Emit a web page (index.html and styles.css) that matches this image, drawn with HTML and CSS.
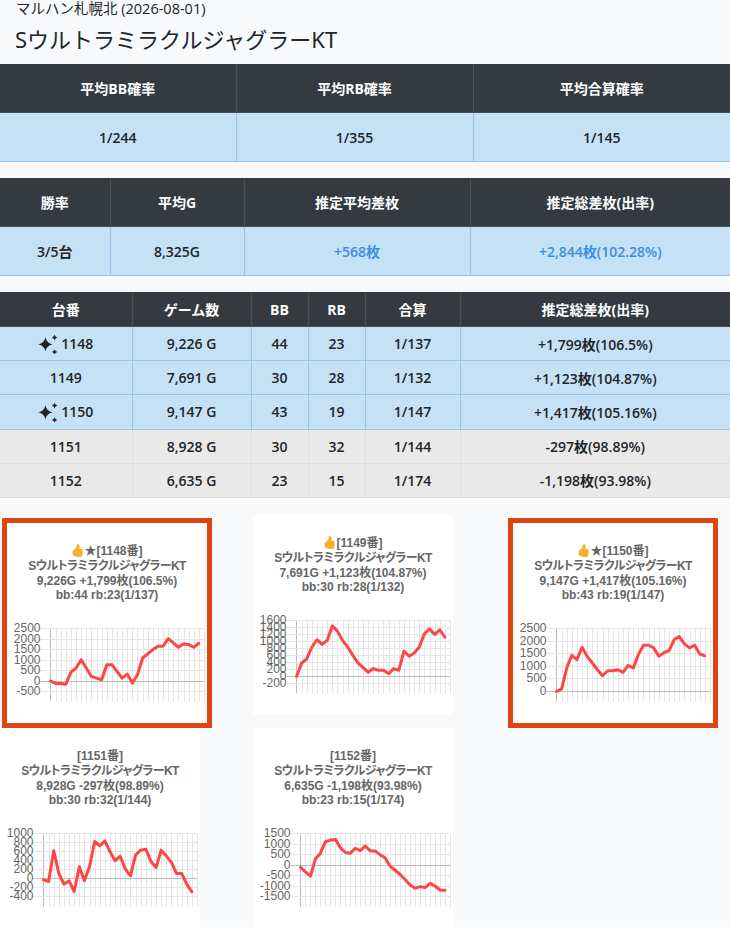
FILE: index.html
```html
<!DOCTYPE html>
<html lang="ja">
<head>
<meta charset="utf-8">
<title>SウルトラミラクルジャグラーKT - マルハン札幌北</title>
<link rel="stylesheet" href="styles.css">
<script src="script.js" defer></script>
</head>
<body>
<header class="page-head">
  <div class="shop">マルハン札幌北 (2026-08-01)</div>
  <h1 class="machine">SウルトラミラクルジャグラーKT</h1>
</header>

<table class="stats tall">
  <colgroup><col class="c236"><col class="c237"><col></colgroup>
  <thead><tr><th>平均BB確率</th><th>平均RB確率</th><th>平均合算確率</th></tr></thead>
  <tbody><tr class="win"><td>1/244</td><td>1/355</td><td>1/145</td></tr></tbody>
</table>

<table class="stats tall">
  <colgroup><col class="c110"><col class="c134"><col class="c226"><col></colgroup>
  <thead><tr><th>勝率</th><th>平均G</th><th>推定平均差枚</th><th>推定総差枚(出率)</th></tr></thead>
  <tbody><tr class="win"><td>3/5台</td><td>8,325G</td><td class="plus">+568枚</td><td class="plus">+2,844枚(102.28%)</td></tr></tbody>
</table>

<table class="stats short">
  <colgroup><col class="c132"><col class="c119"><col class="c57"><col class="c57"><col class="c95"><col></colgroup>
  <thead><tr><th>台番</th><th>ゲーム数</th><th>BB</th><th>RB</th><th>合算</th><th>推定総差枚(出率)</th></tr></thead>
  <tbody>
    <tr class="win"><td><svg class="sparkle" viewBox="0 0 20 20" aria-hidden="true"><path d="M7.4 3.2Q8.6 9 14.4 10.3Q8.6 11.6 7.4 17.4Q6.2 11.6 0.4 10.3Q6.2 9 7.4 3.2Z"/><path d="M16.6 0.8Q17.1 3.1 19.4 3.6Q17.1 4.1 16.6 6.4Q16.1 4.1 13.8 3.6Q16.1 3.1 16.6 0.8Z"/><path d="M16.6 15.2Q17.1 17.5 19.4 18Q17.1 18.5 16.6 20.8Q16.1 18.5 13.8 18Q16.1 17.5 16.6 15.2Z"/></svg>1148</td><td>9,226 G</td><td>44</td><td>23</td><td>1/137</td><td>+1,799枚(106.5%)</td></tr>
    <tr class="win"><td>1149</td><td>7,691 G</td><td>30</td><td>28</td><td>1/132</td><td>+1,123枚(104.87%)</td></tr>
    <tr class="win"><td><svg class="sparkle" viewBox="0 0 20 20" aria-hidden="true"><path d="M7.4 3.2Q8.6 9 14.4 10.3Q8.6 11.6 7.4 17.4Q6.2 11.6 0.4 10.3Q6.2 9 7.4 3.2Z"/><path d="M16.6 0.8Q17.1 3.1 19.4 3.6Q17.1 4.1 16.6 6.4Q16.1 4.1 13.8 3.6Q16.1 3.1 16.6 0.8Z"/><path d="M16.6 15.2Q17.1 17.5 19.4 18Q17.1 18.5 16.6 20.8Q16.1 18.5 13.8 18Q16.1 17.5 16.6 15.2Z"/></svg>1150</td><td>9,147 G</td><td>43</td><td>19</td><td>1/147</td><td>+1,417枚(105.16%)</td></tr>
    <tr class="lose"><td>1151</td><td>8,928 G</td><td>30</td><td>32</td><td>1/144</td><td>-297枚(98.89%)</td></tr>
    <tr class="lose"><td>1152</td><td>6,635 G</td><td>23</td><td>15</td><td>1/174</td><td>-1,198枚(93.98%)</td></tr>
  </tbody>
</table>

<section class="charts">
  <article class="card hot">
    <div class="card-title">
      <div><svg class="thumb" viewBox="0 0 16 16" aria-hidden="true"><path d="M6.956 1.745C7.021.81 7.908.087 8.864.325l.261.066c.463.116.874.456 1.012.965.22.816.533 2.511.062 4.51a9.84 9.84 0 0 1 .443-.051c.713-.065 1.669-.072 2.516.21.518.173.994.681 1.2 1.273.184.532.16 1.162-.234 1.733.058.119.103.242.138.363.077.27.113.567.113.856 0 .289-.036.586-.113.856-.039.135-.09.273-.16.404.169.387.107.819-.003 1.148a3.163 3.163 0 0 1-.488.901c.054.152.076.312.076.465 0 .305-.089.625-.253.912C13.1 15.522 12.437 16 11.5 16H8c-.605 0-1.07-.081-1.466-.218a4.82 4.82 0 0 1-.97-.484l-.048-.03c-.504-.307-.999-.609-2.068-.722C2.682 14.464 2 13.846 2 13V9c0-.85.685-1.432 1.357-1.615.849-.232 1.574-.787 2.132-1.41.56-.627.914-1.28 1.039-1.639.199-.575.356-1.539.428-2.59z"/></svg>★[1148番]</div>
      <div class="name">SウルトラミラクルジャグラーKT</div>
      <div>9,226G +1,799枚(106.5%)</div>
      <div>bb:44 rb:23(1/137)</div>
    </div>
    <div class="plot" data-min="-500" data-max="2500" data-step="500" data-values="0,-117,-117,-150,425,617,1016,617,218,138,58,777,777,457,138,330,-100,298,1096,1287,1495,1654,1654,2021,1814,1607,1766,1734,1607,1799"></div>
  </article>

  <article class="card">
    <div class="card-title">
      <div><svg class="thumb" viewBox="0 0 16 16" aria-hidden="true"><path d="M6.956 1.745C7.021.81 7.908.087 8.864.325l.261.066c.463.116.874.456 1.012.965.22.816.533 2.511.062 4.51a9.84 9.84 0 0 1 .443-.051c.713-.065 1.669-.072 2.516.21.518.173.994.681 1.2 1.273.184.532.16 1.162-.234 1.733.058.119.103.242.138.363.077.27.113.567.113.856 0 .289-.036.586-.113.856-.039.135-.09.273-.16.404.169.387.107.819-.003 1.148a3.163 3.163 0 0 1-.488.901c.054.152.076.312.076.465 0 .305-.089.625-.253.912C13.1 15.522 12.437 16 11.5 16H8c-.605 0-1.07-.081-1.466-.218a4.82 4.82 0 0 1-.97-.484l-.048-.03c-.504-.307-.999-.609-2.068-.722C2.682 14.464 2 13.846 2 13V9c0-.85.685-1.432 1.357-1.615.849-.232 1.574-.787 2.132-1.41.56-.627.914-1.28 1.039-1.639.199-.575.356-1.539.428-2.59z"/></svg>[1149番]</div>
      <div class="name">SウルトラミラクルジャグラーKT</div>
      <div>7,691G +1,123枚(104.87%)</div>
      <div>bb:30 rb:28(1/132)</div>
    </div>
    <div class="plot" data-min="-200" data-max="1600" data-step="200" data-values="0,387,501,842,1051,918,1032,1448,1297,1032,842,605,387,255,122,226,179,179,84,226,179,728,577,672,842,1221,1363,1202,1335,1123"></div>
  </article>

  <article class="card hot">
    <div class="card-title">
      <div><svg class="thumb" viewBox="0 0 16 16" aria-hidden="true"><path d="M6.956 1.745C7.021.81 7.908.087 8.864.325l.261.066c.463.116.874.456 1.012.965.22.816.533 2.511.062 4.51a9.84 9.84 0 0 1 .443-.051c.713-.065 1.669-.072 2.516.21.518.173.994.681 1.2 1.273.184.532.16 1.162-.234 1.733.058.119.103.242.138.363.077.27.113.567.113.856 0 .289-.036.586-.113.856-.039.135-.09.273-.16.404.169.387.107.819-.003 1.148a3.163 3.163 0 0 1-.488.901c.054.152.076.312.076.465 0 .305-.089.625-.253.912C13.1 15.522 12.437 16 11.5 16H8c-.605 0-1.07-.081-1.466-.218a4.82 4.82 0 0 1-.97-.484l-.048-.03c-.504-.307-.999-.609-2.068-.722C2.682 14.464 2 13.846 2 13V9c0-.85.685-1.432 1.357-1.615.849-.232 1.574-.787 2.132-1.41.56-.627.914-1.28 1.039-1.639.199-.575.356-1.539.428-2.59z"/></svg>★[1150番]</div>
      <div class="name">SウルトラミラクルジャグラーKT</div>
      <div>9,147G +1,417枚(105.16%)</div>
      <div>bb:43 rb:19(1/147)</div>
    </div>
    <div class="plot" data-min="0" data-max="2500" data-step="500" data-values="0,106,931,1436,1263,1755,1396,1130,864,625,824,824,864,758,1037,931,1463,1835,1835,1729,1396,1543,1622,2061,2181,1888,1729,1835,1489,1417"></div>
  </article>

  <article class="card">
    <div class="card-title">
      <div>[1151番]</div>
      <div class="name">SウルトラミラクルジャグラーKT</div>
      <div>8,928G -297枚(98.89%)</div>
      <div>bb:30 rb:32(1/144)</div>
    </div>
    <div class="plot" data-min="-400" data-max="1000" data-step="200" data-values="-30,-67,615,111,-126,-52,-289,259,-52,267,822,726,837,593,393,496,207,59,526,630,652,378,244,630,504,356,111,111,-126,-297"></div>
  </article>

  <article class="card">
    <div class="card-title">
      <div>[1152番]</div>
      <div class="name">SウルトラミラクルジャグラーKT</div>
      <div>6,635G -1,198枚(93.98%)</div>
      <div>bb:23 rb:15(1/174)</div>
    </div>
    <div class="plot" data-min="-1500" data-max="1500" data-step="500" data-values="-109,-328,-531,297,563,1109,1188,1219,828,594,563,797,688,906,672,672,484,328,-63,-250,-453,-688,-953,-1109,-1031,-1078,-875,-1000,-1188,-1198"></div>
  </article>
</section>
</body>
</html>
```

FILE: styles.css
```css
html {
  background: #f8f9fa;
}

body {
  margin: 0;
  background: #f8f9fa;
  color: #212529;
  font-family: "Open Sans", "Noto Sans CJK JP", sans-serif;
}

.page-head {
  padding: 0 15px;
}

.shop {
  font-size: 14.5px;
  line-height: 18px;
  padding-left: 1px;
}

.machine {
  margin: 5px 0 8px;
  font-family: "Noto Sans", "Noto Sans CJK JP", sans-serif;
  font-size: 22px;
  font-weight: 400;
  line-height: 33px;
}

/* ---------- tables ---------- */
.stats {
  width: 100%;
  border-collapse: collapse;
  table-layout: fixed;
  margin-bottom: 16px;
  font-size: 14px;
  text-align: center;
}

.stats th {
  background: #343a40;
  color: #fff;
  font-weight: 700;
  padding: 0 6px;
  border: 1px solid #484f56;
  border-top: none;
}

.stats td {
  padding: 0 6px;
  font-weight: 600;
  white-space: nowrap;
}

.stats th:first-child,
.stats td:first-child {
  border-left: none;
}

.stats th:last-child,
.stats td:last-child {
  border-right: none;
}

.tall th,
.tall td {
  height: 48px;
}

.short th {
  height: 34px;
}

.short td {
  height: 33.2px;
}

.win td {
  background: #c5e1f6;
  border: 1px solid #96c5ed;
}

.lose td {
  background: #e9e9e9;
  border: 1px solid #dcdee0;
}

.plus {
  color: #3a8fdd;
}

.c236 { width: 236px; }
.c237 { width: 237px; }
.c110 { width: 110px; }
.c134 { width: 134px; }
.c226 { width: 226px; }
.c132 { width: 132px; }
.c119 { width: 119px; }
.c57 { width: 57px; }
.c95 { width: 95px; }

.sparkle {
  width: 20px;
  height: 20px;
  margin-right: 3px;
  vertical-align: -5px;
  fill: #212529;
}

/* ---------- chart cards ---------- */
.charts {
  display: grid;
  grid-template-columns: 253px 253px 1fr;
  align-items: start;
  margin-top: 17px;
}

.card {
  width: 200px;
  height: 200px;
  background: #fff;
}

.card.hot {
  margin: 3px 0 0 2px;
  border: 5px solid #df4510;
}

.card-title {
  box-sizing: border-box;
  height: 82px;
  padding-top: 21px;
  font-family: "Liberation Sans", "Noto Sans CJK JP", sans-serif;
  font-size: 12px;
  font-weight: 700;
  line-height: 14.8px;
  color: #666;
  text-align: center;
  white-space: nowrap;
  font-feature-settings: "palt";
}

.card-title .name {
  letter-spacing: -0.6px;
}

.thumb {
  width: 13px;
  height: 13px;
  vertical-align: -2px;
  fill: #f6b02a;
}

.plot {
  height: 118px;
}

.plot svg {
  display: block;
}

.tick {
  font-family: "Liberation Sans", sans-serif;
  font-size: 12px;
  fill: #666;
}

.grid {
  stroke: #e5e5e5;
  stroke-width: 1;
}

.zero {
  stroke: #bdbdbd;
  stroke-width: 1;
}

.series {
  fill: none;
  stroke: #ff4646;
  stroke-width: 3;
  stroke-linejoin: round;
  stroke-linecap: round;
}
```

FILE: script.js
```js
(function () {
  var NS = 'http://www.w3.org/2000/svg';
  var ctx = document.createElement('canvas').getContext('2d');
  ctx.font = '12px "Liberation Sans"';
  var TOP = 23.5, BOT = 86.5, RIGHT = 197, TICK = 10, W = 200, H = 118, SLOTS = 30;

  function el(name, attrs, cls) {
    var n = document.createElementNS(NS, name);
    for (var k in attrs) n.setAttribute(k, attrs[k]);
    if (cls) n.setAttribute('class', cls);
    return n;
  }

  document.querySelectorAll('.plot').forEach(function (box) {
    var min = +box.dataset.min, max = +box.dataset.max, step = +box.dataset.step;
    var vals = box.dataset.values.split(',').map(Number);
    var ticks = [];
    for (var v = max; v >= min; v -= step) ticks.push(v);
    var lw = 0;
    ticks.forEach(function (t) { lw = Math.max(lw, ctx.measureText(String(t)).width); });
    var left = Math.round(6 + lw + TICK) + 0.5;
    var dx = (RIGHT - left) / SLOTS;
    function yOf(val) { return TOP + (max - val) / (max - min) * (BOT - TOP); }

    var svg = el('svg', { width: W, height: H, viewBox: '0 0 ' + W + ' ' + H });

    for (var i = 0; i <= SLOTS; i++) {
      var x = Math.round(left + i * dx) + 0.5;
      if (i === 0) x = left;
      svg.appendChild(el('line', { x1: x, y1: TOP, x2: x, y2: BOT + TICK }, i === 0 ? 'zero' : 'grid'));
    }
    ticks.forEach(function (t) {
      var y = Math.round(yOf(t) - 0.5) + 0.5;
      svg.appendChild(el('line', { x1: left - TICK, y1: y, x2: RIGHT, y2: y }, t === 0 ? 'zero' : 'grid'));
      var tx = el('text', { x: left - TICK, y: y, 'text-anchor': 'end', 'dominant-baseline': 'middle' }, 'tick');
      tx.textContent = String(t);
      svg.appendChild(tx);
    });

    var pts = vals.map(function (val, idx) {
      return (left + idx * dx).toFixed(2) + ',' + yOf(val).toFixed(2);
    }).join(' ');
    svg.appendChild(el('polyline', { points: pts }, 'series'));

    box.appendChild(svg);
  });
})();
```
